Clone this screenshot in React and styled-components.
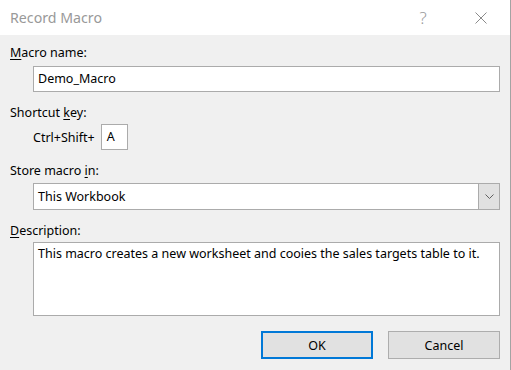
import React from "react";
import styled, { createGlobalStyle } from "styled-components";

const Global = createGlobalStyle`
  html, body { margin: 0; padding: 0; background: #f0f0f0; }
  body { font-family: "Noto Sans", "Segoe UI", sans-serif; }
`;

const Window = styled.div`
  width: 511px;
  height: 370px;
  box-sizing: border-box;
  border-right: 1px solid #a3a3a3;
  background: #f0f0f0;
  display: flex;
  flex-direction: column;
  overflow: hidden;
`;

const TitleBar = styled.div`
  height: 35px;
  flex: none;
  background: #ffffff;
  display: flex;
  align-items: center;
  padding-left: 10px;
`;

const Title = styled.div`
  flex: 1;
  font-size: 14.2px;
  color: #999999;
`;

const TitleButton = styled.div`
  width: 58px;
  height: 35px;
  display: flex;
  align-items: center;
  justify-content: center;
  color: #9a9a9a;
  font-size: 17px;
  font-weight: 300;
`;

const Body = styled.div`
  flex: 1;
  display: flex;
  flex-direction: column;
  padding: 10px 10px 0 10px;
  font-size: 12.5px;
  color: #000;
`;

const Label = styled.div`
  height: 16px;
  line-height: 16px;
  margin-top: ${(p) => p.$mt || 0}px;
`;

const Key = styled.span`
  text-decoration: underline;
  text-underline-offset: 2px;
`;

const Indent = styled.div`
  margin-left: 23px;
  margin-top: ${(p) => p.$mt || 0}px;
`;

const TextBox = styled.div`
  height: ${(p) => p.$h || 26}px;
  box-sizing: border-box;
  border: 1px solid #ababab;
  background: #fff;
  display: flex;
  align-items: ${(p) => (p.$top ? "flex-start" : "center")};
  padding: ${(p) => (p.$top ? "3px 4px" : "0 4px")};
  line-height: 16px;
`;

const ShortcutRow = styled.div`
  display: flex;
  align-items: center;
  gap: 6px;
`;

const KeyBox = styled(TextBox)`
  width: 27px;
  padding: 0 5px;
`;

const Select = styled.div`
  height: 27px;
  box-sizing: border-box;
  border: 1px solid #ababab;
  background: #fff;
  display: flex;
`;

const SelectValue = styled.div`
  flex: 1;
  display: flex;
  align-items: center;
  padding-left: 4px;
`;

const DropButton = styled.div`
  width: 20px;
  background: #e1e1e1;
  border-left: 1px solid #ababab;
  display: flex;
  align-items: center;
  justify-content: center;
`;

const ButtonRow = styled.div`
  display: flex;
  justify-content: flex-end;
  gap: 15px;
  margin-top: 15px;
`;

const Button = styled.div`
  width: 112px;
  height: 28px;
  box-sizing: border-box;
  background: #e1e1e1;
  border: ${(p) => (p.$default ? "2px solid #0078d7" : "1px solid #adadad")};
  display: flex;
  align-items: center;
  justify-content: center;
`;

export default function App() {
  return (
    <>
      <Global />
      <Window>
        <TitleBar>
          <Title>Record Macro</Title>
          <TitleButton>?</TitleButton>
          <TitleButton>
            <svg width="12" height="12" viewBox="0 0 12 12">
              <path d="M0.5 0.5 L11.5 11.5 M11.5 0.5 L0.5 11.5" stroke="#8a8a8a" strokeWidth="1" fill="none" />
            </svg>
          </TitleButton>
        </TitleBar>
        <Body>
          <Label>
            <Key>M</Key>acro name:
          </Label>
          <Indent $mt={5}>
            <TextBox>Demo_Macro</TextBox>
          </Indent>
          <Label $mt={13}>
            Shortcut <Key>k</Key>ey:
          </Label>
          <Indent $mt={3}>
            <ShortcutRow>
              <span>Ctrl+Shift+</span>
              <KeyBox>A</KeyBox>
            </ShortcutRow>
          </Indent>
          <Label $mt={13}>
            Store macro <Key>i</Key>n:
          </Label>
          <Indent $mt={4}>
            <Select>
              <SelectValue>This Workbook</SelectValue>
              <DropButton>
                <svg width="9" height="5" viewBox="0 0 9 5">
                  <path d="M0.5 0.5 L4.5 4.5 L8.5 0.5" stroke="#606060" strokeWidth="1" fill="none" />
                </svg>
              </DropButton>
            </Select>
          </Indent>
          <Label $mt={13}>
            <Key>D</Key>escription:
          </Label>
          <Indent $mt={3}>
            <TextBox $h={74} $top>
              This macro creates a new worksheet and cooies the sales targets table to it.
            </TextBox>
          </Indent>
          <ButtonRow>
            <Button $default>OK</Button>
            <Button>Cancel</Button>
          </ButtonRow>
        </Body>
      </Window>
    </>
  );
}
